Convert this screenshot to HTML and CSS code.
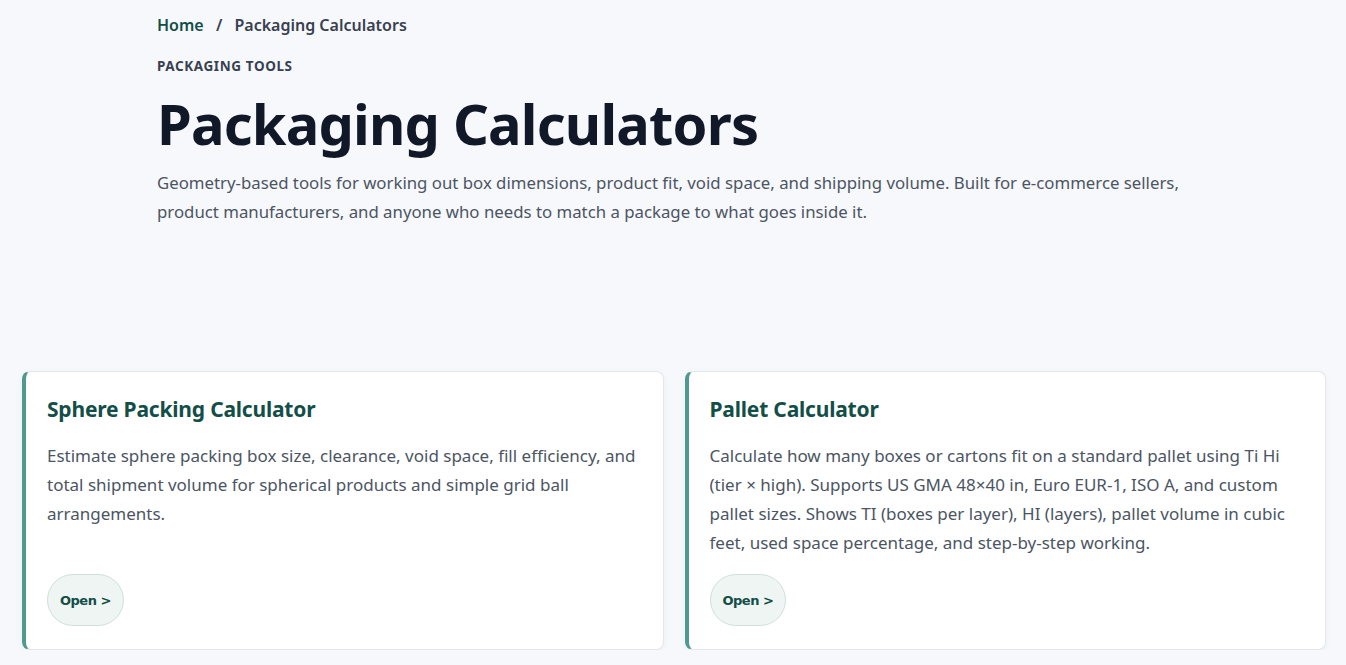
FILE: index.html
```html
<!DOCTYPE html>
<html lang="en">
<head>
    <meta charset="UTF-8">
    <meta name="viewport" content="width=device-width, initial-scale=1.0">
    <title>Packaging Calculators</title>
    <link rel="stylesheet" href="styles.css">
</head>
<body>

    <header class="page-head">
        <nav class="breadcrumb">
            <a href="#" class="crumb-home">Home</a>
            <span class="crumb-sep">/</span>
            <span class="crumb-current">Packaging Calculators</span>
        </nav>
        <p class="eyebrow">Packaging Tools</p>
        <h1>Packaging Calculators</h1>
        <p class="lead">Geometry-based tools for working out box dimensions, product fit, void space, and shipping volume. Built for e-commerce sellers, product manufacturers, and anyone who needs to match a package to what goes inside it.</p>
    </header>

    <!-- calculator cards -->
    <section class="tool-grid">
        <article class="tool-card">
            <h2>Sphere Packing Calculator</h2>
            <p>Estimate sphere packing box size, clearance, void space, fill efficiency, and total shipment volume for spherical products and simple grid ball arrangements.</p>
            <a href="#" class="open-btn">Open &gt;</a>
        </article>
        <article class="tool-card">
            <h2>Pallet Calculator</h2>
            <p>Calculate how many boxes or cartons fit on a standard pallet using Ti Hi (tier &times; high). Supports US GMA 48&times;40 in, Euro EUR-1, ISO A, and custom pallet sizes. Shows TI (boxes per layer), HI (layers), pallet volume in cubic feet, used space percentage, and step-by-step working.</p>
            <a href="#" class="open-btn">Open &gt;</a>
        </article>
    </section>

</body>
</html>
```

FILE: styles.css
```css
  body {
      font-family: 'Noto Sans', 'Open Sans', sans-serif;
      background-color: #f7f8fb;
      color: #4b5563;
      margin: 0;
      padding: 0;
  }
  a {
      text-decoration: none;
  }

  /* 页面头部 */
  .page-head {
      width: 1032px;
      margin: 0 auto;
      padding-top: 13px;
      height: 358px;
      box-sizing: border-box;
  }
  .breadcrumb {
      font-size: 16px;
      font-weight: 600;
      line-height: 24px;
      color: #374151;
  }
  .crumb-home {
      color: #134e48;
  }
  .crumb-sep {
      margin: 0 8px;
  }
  .eyebrow {
      margin: 20px 0 0;
      font-size: 13.5px;
      font-weight: 700;
      line-height: 18px;
      letter-spacing: 0.6px;
      text-transform: uppercase;
      color: #374151;
  }
  h1 {
      margin: 11px 0 0;
      font-size: 56px;
      font-weight: 700;
      line-height: 74px;
      letter-spacing: -0.8px;
      color: #111827;
  }
  .lead {
      margin: 8px 0 0;
      font-size: 16.8px;
      line-height: 29px;
      color: #4b5563;
  }

  /* 卡片网格 */
  .tool-grid {
      display: grid;
      grid-template-columns: 1fr 1fr;
      gap: 21px;
      padding: 13px 20px 0 22px;
  }
  .tool-card {
      display: flex;
      flex-direction: column;
      align-items: flex-start;
      background-color: #fff;
      border: 1px solid #e3e6ea;
      border-left: 4px solid #4f9990;
      border-radius: 8px;
      padding: 24px 24px 23px 21px;
      box-shadow: 0 2px 8px rgba(15, 23, 42, 0.04);
  }
  .tool-card h2 {
      margin: 0;
      font-size: 21px;
      font-weight: 700;
      line-height: 27px;
      letter-spacing: -0.2px;
      color: #134e48;
  }
  .tool-card p {
      flex: 1;
      margin: 18px 0 17px;
      font-size: 17px;
      line-height: 29px;
      color: #4b5563;
  }
  .open-btn {
      display: inline-flex;
      align-items: center;
      justify-content: center;
      height: 52px;
      padding: 0 12px;
      box-sizing: border-box;
      font-family: 'DejaVu Sans', Verdana, sans-serif;
      font-size: 13px;
      font-weight: bold;
      letter-spacing: -0.5px;
      color: #134e48;
      background-color: #eef5f3;
      border: 1px solid #cfe1dc;
      border-radius: 26px;
  }
```
